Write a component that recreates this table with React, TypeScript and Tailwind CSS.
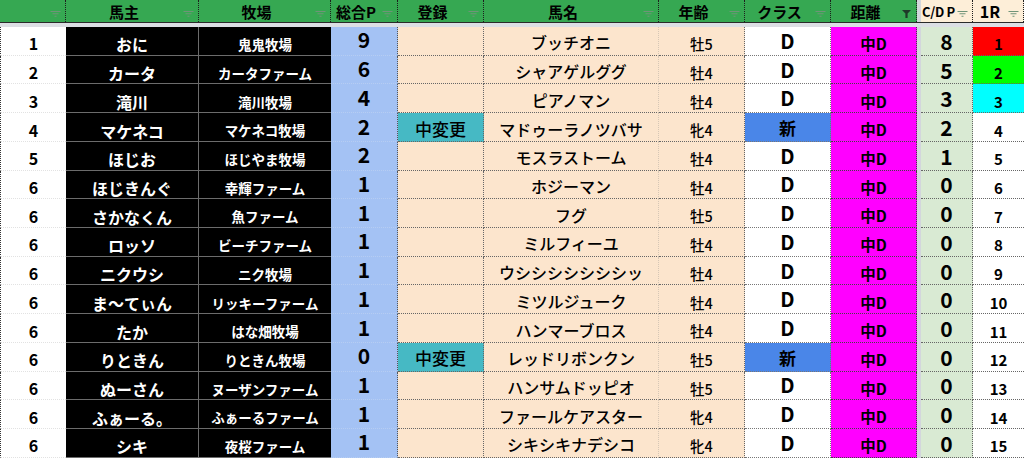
import React from 'react';

type Row = {
  rank: string;
  owner: string;
  farm: string;
  total: string;
  reg: string;
  horse: string;
  age: string;
  cls: string;
  cdp: string;
  r1: string;
  r1bg: string;
};

const rows: Row[] = [
  { rank: '1', owner: 'おに', farm: '鬼鬼牧場', total: '9', reg: '', horse: 'ブッチオニ', age: '牡5', cls: 'D', cdp: '8', r1: '1', r1bg: 'bg-[#ff0000]' },
  { rank: '2', owner: 'カータ', farm: 'カータファーム', total: '6', reg: '', horse: 'シャアゲルググ', age: '牡4', cls: 'D', cdp: '5', r1: '2', r1bg: 'bg-[#00ff00]' },
  { rank: '3', owner: '滝川', farm: '滝川牧場', total: '4', reg: '', horse: 'ピアノマン', age: '牡4', cls: 'D', cdp: '3', r1: '3', r1bg: 'bg-[#00ffff]' },
  { rank: '4', owner: 'マケネコ', farm: 'マケネコ牧場', total: '2', reg: '中変更', horse: 'マドゥーラノツバサ', age: '牝4', cls: '新', cdp: '2', r1: '4', r1bg: 'bg-white' },
  { rank: '5', owner: 'ほじお', farm: 'ほじやま牧場', total: '2', reg: '', horse: 'モスラストーム', age: '牡4', cls: 'D', cdp: '1', r1: '5', r1bg: 'bg-white' },
  { rank: '6', owner: 'ほじきんぐ', farm: '幸輝ファーム', total: '1', reg: '', horse: 'ホジーマン', age: '牡4', cls: 'D', cdp: '0', r1: '6', r1bg: 'bg-white' },
  { rank: '6', owner: 'さかなくん', farm: '魚ファーム', total: '1', reg: '', horse: 'フグ', age: '牡5', cls: 'D', cdp: '0', r1: '7', r1bg: 'bg-white' },
  { rank: '6', owner: 'ロッソ', farm: 'ビーチファーム', total: '1', reg: '', horse: 'ミルフィーユ', age: '牡4', cls: 'D', cdp: '0', r1: '8', r1bg: 'bg-white' },
  { rank: '6', owner: 'ニクウシ', farm: 'ニク牧場', total: '1', reg: '', horse: 'ウシシシシシシシッ', age: '牡4', cls: 'D', cdp: '0', r1: '9', r1bg: 'bg-white' },
  { rank: '6', owner: 'ま〜てぃん', farm: 'リッキーファーム', total: '1', reg: '', horse: 'ミツルジューク', age: '牡4', cls: 'D', cdp: '0', r1: '10', r1bg: 'bg-white' },
  { rank: '6', owner: 'たか', farm: 'はな畑牧場', total: '1', reg: '', horse: 'ハンマーブロス', age: '牡4', cls: 'D', cdp: '0', r1: '11', r1bg: 'bg-white' },
  { rank: '6', owner: 'りときん', farm: 'りときん牧場', total: '0', reg: '中変更', horse: 'レッドリボンクン', age: '牡5', cls: '新', cdp: '0', r1: '12', r1bg: 'bg-white' },
  { rank: '6', owner: 'ぬーさん', farm: 'ヌーザンファーム', total: '1', reg: '', horse: 'ハンサムドッピオ', age: '牡5', cls: 'D', cdp: '0', r1: '13', r1bg: 'bg-white' },
  { rank: '6', owner: 'ふぁーる。', farm: 'ふぁーるファーム', total: '1', reg: '', horse: 'ファールケアスター', age: '牝4', cls: 'D', cdp: '0', r1: '14', r1bg: 'bg-white' },
  { rank: '6', owner: 'シキ', farm: '夜桜ファーム', total: '1', reg: '', horse: 'シキシキナデシコ', age: '牝4', cls: 'D', cdp: '0', r1: '15', r1bg: 'bg-white' },
];

function FilterIcon({ className }: { className: string }) {
  return (
    <svg width="11" height="6" viewBox="0 0 11 6" className={className}>
      <path d="M0.5 0.5h10M2.5 2.8h6M4.5 5.2h2" stroke="currentColor" strokeWidth="1.1" />
    </svg>
  );
}

function FunnelIcon() {
  return (
    <svg width="9" height="8" viewBox="0 0 9 8" className="absolute right-[5px] top-[10px]">
      <path d="M0 0h9L5.6 3.6V8H3.4V3.6z" fill="#1f3a29" />
    </svg>
  );
}

function HeadCell({ w, label, bg, icon, text }: { w: string; label: string; bg: string; icon: 'lines' | 'funnel'; text?: string }) {
  return (
    <div className={`relative flex h-full items-center justify-center pr-4 border-r border-dotted border-[#1d1d1d] ${w} ${bg}`}>
      <span className={`font-bold text-black ${text ?? 'text-[15px]'}`}>{label}</span>
      {icon === 'funnel' ? (
        <FunnelIcon />
      ) : (
        <FilterIcon className="absolute right-[4px] top-[11px] text-[#6f9478]" />
      )}
    </div>
  );
}

export default function App() {
  return (
    <div
      className="w-[1024px] h-[458px] overflow-hidden bg-white text-black"
      style={{ fontFamily: '"Noto Sans CJK JP", "Noto Sans", sans-serif' }}
    >
      {/* header */}
      <div className="flex h-[22px] leading-none">
        <HeadCell w="w-[66px]" label="" bg="bg-[#36a852]" icon="lines" />
        <HeadCell w="w-[133px]" label="馬主" bg="bg-[#36a852]" icon="lines" />
        <HeadCell w="w-[132px]" label="牧場" bg="bg-[#36a852]" icon="lines" />
        <HeadCell w="w-[67px]" label="総合P" bg="bg-[#36a852]" icon="lines" />
        <HeadCell w="w-[86px]" label="登録" bg="bg-[#36a852]" icon="lines" />
        <HeadCell w="w-[175px]" label="馬名" bg="bg-[#36a852]" icon="lines" />
        <HeadCell w="w-[86px]" label="年齢" bg="bg-[#36a852]" icon="lines" />
        <HeadCell w="w-[86px]" label="クラス" bg="bg-[#36a852]" icon="lines" />
        <HeadCell w="w-[86px]" label="距離" bg="bg-[#36a852]" icon="funnel" />
        <div className="w-[4px] h-full bg-[#d3d6dc]" />
        <HeadCell w="w-[52px]" label="C/D P" bg="bg-[#fdeed8]" icon="lines" text="text-[13px] tracking-[-0.3px]" />
        <HeadCell w="w-[51px]" label="1R" bg="bg-[#fdeed8]" icon="lines" text="text-[16px]" />
      </div>
      <div className="h-[1px] bg-[#2a2a2a]" />
      <div className="h-[4px] bg-[#dcdfe4]" />

      {/* body */}
      <div className="flex flex-col leading-none">
        {rows.map((r, i) => (
          <div key={i} className="flex h-[28.73px]">
            <div className="flex w-[66px] items-center justify-center pt-[5px] border-l border-dotted border-l-[#333] border-b border-b-[#e2e2e2] bg-white text-[16px] font-bold">
              {r.rank}
            </div>
            <div className="flex w-[133px] items-center justify-center pt-[7px] bg-black border-r border-b border-[#6c6c6c] text-white text-[16px] font-bold">
              {r.owner}
            </div>
            <div className="flex w-[132px] items-center justify-center pt-[8px] bg-black border-b border-[#6c6c6c] text-white text-[13.5px] font-bold">
              {r.farm}
            </div>
            <div className="flex w-[67px] items-center justify-center pb-[2px] bg-[#a4c2f4] border-r border-dotted border-r-[#555] border-b border-b-[#b6cdf3] text-[21px] font-bold">
              {r.total}
            </div>
            <div
              className={`flex w-[86px] items-center justify-center pt-[2px] border-r border-b border-dotted border-[#666] text-[17px] font-medium ${
                r.reg ? 'bg-[#46b9c4]' : 'bg-[#fce5cd]'
              }`}
            >
              {r.reg}
            </div>
            <div className="flex w-[175px] items-center justify-center pt-[3px] bg-[#fce5cd] border-r border-r-[#d6c7b6] border-b border-dotted border-b-[#666] text-[16px] font-medium">
              {r.horse}
            </div>
            <div className="flex w-[86px] items-center justify-center pt-[7px] bg-[#fce5cd] border-r border-b border-dotted border-[#666] text-[14.5px] font-medium">
              {r.age}
            </div>
            <div
              className={`flex w-[86px] items-center justify-center border-r border-b border-dotted border-[#777] font-bold ${
                r.cls === '新' ? 'bg-[#4a86e8] text-[17px] pt-[1px]' : 'bg-white text-[20px]'
              }`}
            >
              {r.cls}
            </div>
            <div className="flex w-[86px] items-center justify-center pt-[6px] bg-[#ff00ff] border-r border-b border-dotted border-[#444] text-[15.5px] font-bold">
              中D
            </div>
            <div className="w-[4px] bg-[#d3d6dc]" />
            <div className="flex w-[52px] items-center justify-center pt-[1px] bg-[#d9ead3] border-r border-b border-dotted border-[#666] text-[21px] font-bold">
              {r.cdp}
            </div>
            <div className={`flex w-[51px] items-center justify-center pt-[6px] border-b border-dotted border-[#666] text-[15px] font-bold ${r.r1bg}`}>
              {r.r1}
            </div>
          </div>
        ))}
      </div>
    </div>
  );
}
